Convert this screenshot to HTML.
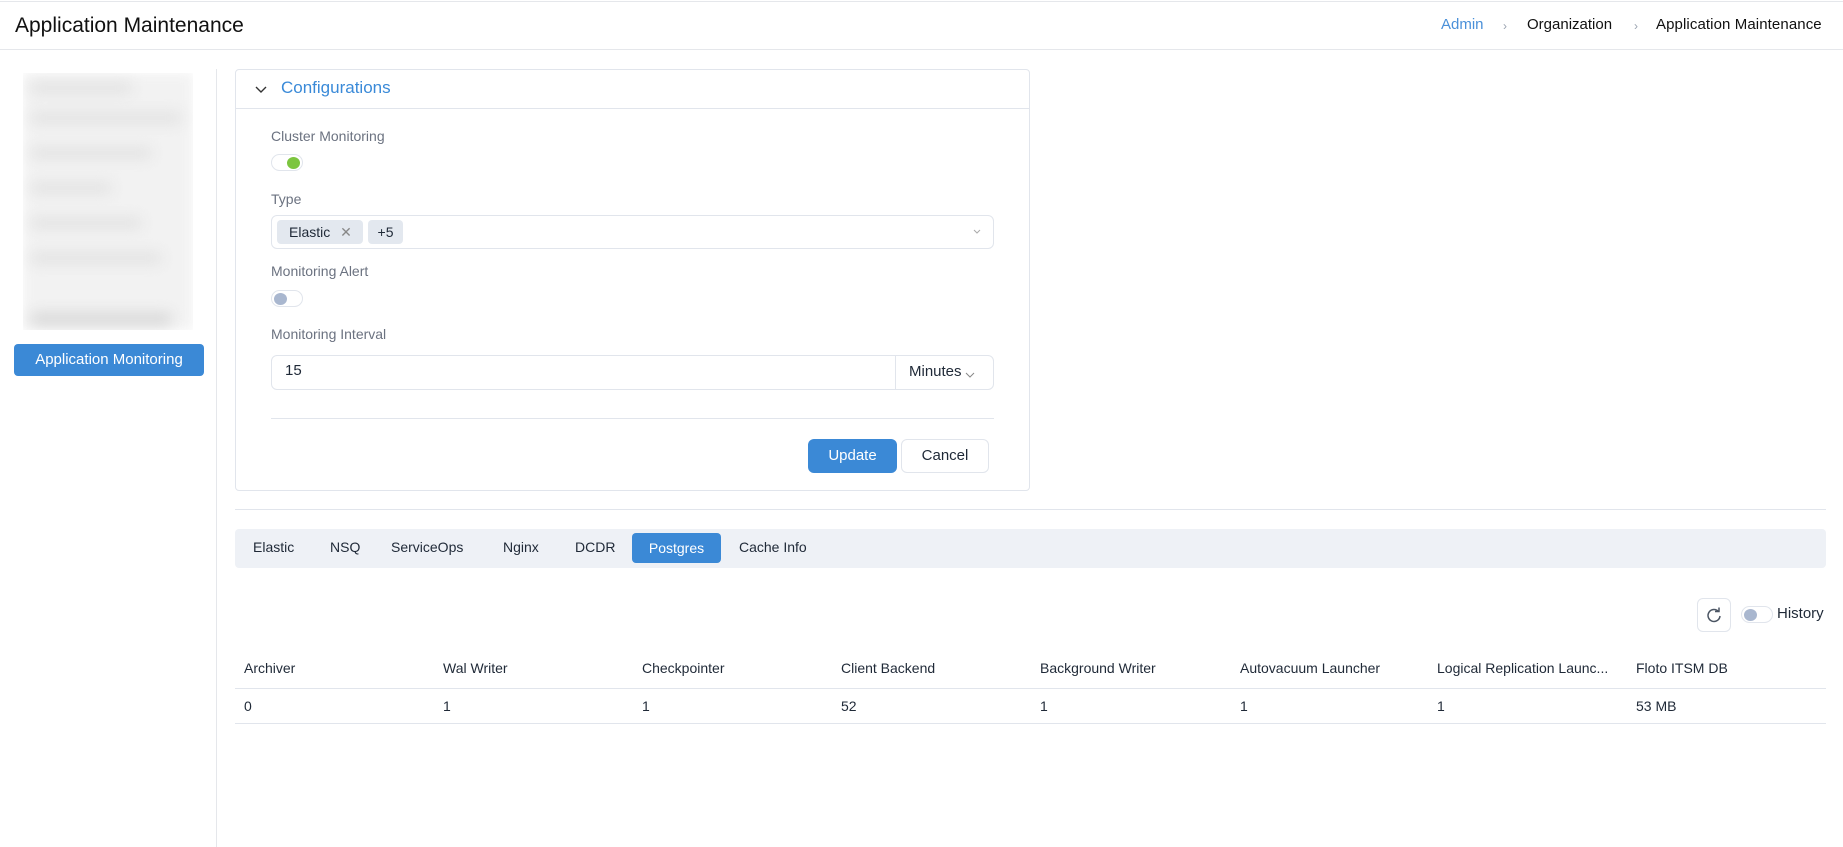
<!DOCTYPE html>
<html><head><meta charset="utf-8"><style>
*{box-sizing:border-box;margin:0;padding:0}
body{width:1843px;height:847px;background:#fff;font-family:"Liberation Sans",sans-serif;color:#1f2937;position:relative;overflow:hidden;font-size:14px}
.a{position:absolute;white-space:nowrap}
.lbl{color:#6b7280;font-size:14px}
.tog{position:absolute;width:32px;height:17px;border:1px solid #e1e5ec;border-radius:9px;background:#fff}
.tog i{position:absolute;top:2px;width:13px;height:12px;border-radius:50%}
.th{position:absolute;top:660px;font-size:14px;color:#1f2937}
.td{position:absolute;top:698px;font-size:14px;color:#1f2937}
</style></head><body>
<div class="a" style="left:0;top:1px;width:1843px;height:1px;background:#e5e7eb"></div>
<div class="a" style="left:15px;top:14px;font-size:21px;color:#111">Application Maintenance</div>
<div class="a" style="left:1441px;top:16px;font-size:15px;color:#4a90d9">Admin</div>
<div class="a" style="left:1503px;top:19px;font-size:12px;color:#9aa3b0">›</div>
<div class="a" style="left:1527px;top:16px;font-size:15px;color:#111">Organization</div>
<div class="a" style="left:1634px;top:19px;font-size:12px;color:#9aa3b0">›</div>
<div class="a" style="left:1656px;top:16px;font-size:15px;color:#111;letter-spacing:0.1px">Application Maintenance</div>
<div class="a" style="left:0;top:49px;width:1843px;height:1px;background:#e5e7eb"></div>

<div class="a" style="left:23px;top:73px;width:170px;height:257px;overflow:hidden">
<div style="position:absolute;left:0;top:0;width:170px;height:257px;background:#f2f2f2;filter:blur(6px)"></div>
<div style="position:absolute;left:8px;top:10px;width:100px;height:10px;background:#e0e0e0;filter:blur(7px)"></div>
<div style="position:absolute;left:8px;top:40px;width:150px;height:10px;background:#e0e0e0;filter:blur(7px)"></div>
<div style="position:absolute;left:8px;top:75px;width:120px;height:10px;background:#e0e0e0;filter:blur(7px)"></div>
<div style="position:absolute;left:8px;top:110px;width:80px;height:10px;background:#e0e0e0;filter:blur(7px)"></div>
<div style="position:absolute;left:8px;top:145px;width:110px;height:10px;background:#e0e0e0;filter:blur(7px)"></div>
<div style="position:absolute;left:8px;top:180px;width:130px;height:10px;background:#e0e0e0;filter:blur(7px)"></div>
<div style="position:absolute;left:8px;top:240px;width:140px;height:12px;background:#d6d6d6;filter:blur(7px)"></div>
</div>
<div class="a" style="left:14px;top:344px;width:190px;height:32px;background:#3b89d6;border-radius:4px;color:#fff;font-size:15px;line-height:32px;text-align:center">Application Monitoring</div>
<div class="a" style="left:216px;top:69px;width:1px;height:778px;background:#e5e7eb"></div>

<div class="a" style="left:235px;top:69px;width:795px;height:422px;border:1px solid #e1e5ec;border-radius:4px"></div>
<div class="a" style="left:235px;top:108px;width:795px;height:1px;background:#e1e5ec"></div>
<svg class="a" style="left:255px;top:85px" width="12" height="9" viewBox="0 0 12 9"><path d="M1 2l5 5 5-5" fill="none" stroke="#333" stroke-width="1.4"/></svg>
<div class="a" style="left:281px;top:78px;font-size:17px;color:#3a8ad8">Configurations</div>

<div class="a lbl" style="left:271px;top:128px">Cluster Monitoring</div>
<div class="tog" style="left:271px;top:154px"><i style="left:15px;background:#7cc53f"></i></div>
<div class="a lbl" style="left:271px;top:191px">Type</div>
<div class="a" style="left:271px;top:215px;width:723px;height:34px;border:1px solid #e1e5ec;border-radius:6px"></div>
<div class="a" style="left:277px;top:220px;width:86px;height:24px;background:#e3e8ef;border-radius:4px;font-size:14px;line-height:24px;padding-left:12px">Elastic <span style="color:#888;margin-left:6px">✕</span></div>
<div class="a" style="left:368px;top:220px;width:35px;height:24px;background:#e3e8ef;border-radius:4px;font-size:14px;line-height:24px;text-align:center">+5</div>
<svg class="a" style="left:973px;top:229px" width="8" height="6"><path d="M1 1l3 3 3-3" fill="none" stroke="#aaa"/></svg>
<div class="a lbl" style="left:271px;top:263px">Monitoring Alert</div>
<div class="tog" style="left:271px;top:290px"><i style="left:2px;background:#a9b7cf"></i></div>
<div class="a lbl" style="left:271px;top:326px">Monitoring Interval</div>
<div class="a" style="left:271px;top:355px;width:723px;height:35px;border:1px solid #e1e5ec;border-radius:6px"></div>
<div class="a" style="left:895px;top:356px;width:1px;height:33px;background:#e1e5ec"></div>
<div class="a" style="left:285px;top:362px;font-size:15px">15</div>
<div class="a" style="left:909px;top:363px;font-size:15px">Minutes</div>
<svg class="a" style="left:965px;top:372px" width="10" height="7"><path d="M1 1l4 4 4-4" fill="none" stroke="#888"/></svg>
<div class="a" style="left:271px;top:418px;width:723px;height:1px;background:#e1e5ec"></div>
<div class="a" style="left:808px;top:439px;width:89px;height:34px;background:#3b89d6;border-radius:6px;color:#fff;font-size:15px;line-height:34px;text-align:center">Update</div>
<div class="a" style="left:901px;top:439px;width:88px;height:34px;border:1px solid #e1e5ec;border-radius:6px;font-size:15px;line-height:32px;text-align:center">Cancel</div>

<div class="a" style="left:235px;top:509px;width:1591px;height:1px;background:#e1e5ec"></div>
<div class="a" style="left:235px;top:529px;width:1591px;height:39px;background:#eef1f6;border-radius:4px"></div>
<div class="a" style="left:253px;top:539px;font-size:14px">Elastic</div>
<div class="a" style="left:330px;top:539px;font-size:14px">NSQ</div>
<div class="a" style="left:391px;top:539px;font-size:14px">ServiceOps</div>
<div class="a" style="left:503px;top:539px;font-size:14px">Nginx</div>
<div class="a" style="left:575px;top:539px;font-size:14px">DCDR</div>
<div class="a" style="left:632px;top:533px;width:89px;height:30px;background:#3b89d6;border-radius:4px;color:#fff;font-size:14px;line-height:30px;text-align:center">Postgres</div>
<div class="a" style="left:739px;top:539px;font-size:14px">Cache Info</div>

<div class="a" style="left:1697px;top:598px;width:34px;height:34px;border:1px solid #e1e5ec;border-radius:6px"></div>
<svg class="a" style="left:1705px;top:606px" width="18" height="18" viewBox="0 0 18 18"><path d="M13.5 5.5A6 6 0 1 0 15 10" fill="none" stroke="#4b5563" stroke-width="1.5"/><path d="M10 5.5h4V1.5" fill="none" stroke="#4b5563" stroke-width="1.5"/></svg>
<div class="tog" style="left:1741px;top:606px"><i style="left:2px;background:#a9b7cf"></i></div>
<div class="a" style="left:1777px;top:605px;font-size:15px">History</div>

<div class="th" style="left:244px">Archiver</div>
<div class="th" style="left:443px">Wal Writer</div>
<div class="th" style="left:642px">Checkpointer</div>
<div class="th" style="left:841px">Client Backend</div>
<div class="th" style="left:1040px">Background Writer</div>
<div class="th" style="left:1240px">Autovacuum Launcher</div>
<div class="th" style="left:1437px">Logical Replication Launc...</div>
<div class="th" style="left:1636px">Floto ITSM DB</div>
<div class="a" style="left:235px;top:688px;width:1591px;height:1px;background:#e1e5ec"></div>
<div class="td" style="left:244px">0</div>
<div class="td" style="left:443px">1</div>
<div class="td" style="left:642px">1</div>
<div class="td" style="left:841px">52</div>
<div class="td" style="left:1040px">1</div>
<div class="td" style="left:1240px">1</div>
<div class="td" style="left:1437px">1</div>
<div class="td" style="left:1636px">53 MB</div>
<div class="a" style="left:235px;top:723px;width:1591px;height:1px;background:#e1e5ec"></div>
</body></html>
